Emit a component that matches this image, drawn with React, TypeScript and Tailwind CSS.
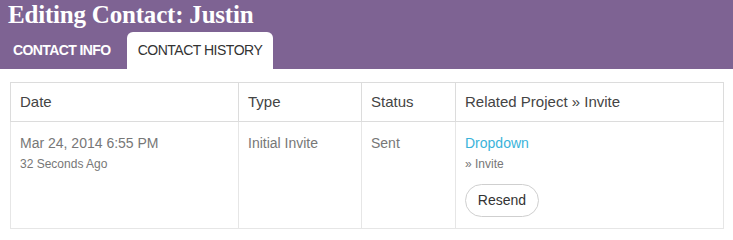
export default function App() {
  return (
    <div className="w-[733px] h-[240px] bg-white overflow-hidden" style={{ fontFamily: '"Liberation Sans", Arial, sans-serif' }}>
      <div className="bg-[#7e6393] h-[69px] flex flex-col">
        <h1
          className="text-white font-bold text-[25px] leading-none pl-[8px] pt-[2px] h-[32px] tracking-[-0.2px]"
          style={{ fontFamily: '"Liberation Serif", serif' }}
        >
          Editing Contact: Justin
        </h1>
        <div className="flex items-end h-[37px] pl-[13px]">
          <div className="h-full w-[114px] flex items-center text-white font-bold text-[14px] tracking-[-0.6px]">
            CONTACT INFO
          </div>
          <div className="h-full w-[146px] bg-white rounded-t-[6px] flex items-center justify-center text-[#333] text-[14px] tracking-[-0.5px]">
            CONTACT HISTORY
          </div>
        </div>
      </div>
      <div className="px-[10px] pt-[13px]">
        <table className="border-collapse border border-[#dcdcdc] w-[714px]">
          <thead>
            <tr className="h-[39px] text-[15px] text-[#444] text-left">
              <th className="font-normal w-[228px] pl-[9px] border border-[#dcdcdc]">Date</th>
              <th className="font-normal w-[123px] pl-[9px] border border-[#dcdcdc]">Type</th>
              <th className="font-normal w-[94px] pl-[9px] border border-[#dcdcdc]">Status</th>
              <th className="font-normal pl-[9px] border border-[#dcdcdc]">Related Project » Invite</th>
            </tr>
          </thead>
          <tbody>
            <tr className="align-top text-[14px] text-[#777]">
              <td className="border border-[#e6e6e6] pl-[9px] pt-[12px]">
                <div className="leading-[18px]">Mar 24, 2014 6:55 PM</div>
                <div className="text-[12px] leading-[16px] mt-[4px]">32 Seconds Ago</div>
              </td>
              <td className="border border-[#e6e6e6] pl-[9px] pt-[12px] leading-[18px]">Initial Invite</td>
              <td className="border border-[#e6e6e6] pl-[9px] pt-[12px] leading-[18px]">Sent</td>
              <td className="border border-[#e6e6e6] pl-[9px] pt-[12px] pb-[11px]">
                <a className="text-[#3ab3da] leading-[18px] block">Dropdown</a>
                <div className="text-[12px] leading-[16px] mt-[4px]">» Invite</div>
                <button className="mt-[12px] h-[33px] w-[74px] rounded-full border border-[#cfcfcf] text-[14px] text-[#333] bg-white">
                  Resend
                </button>
              </td>
            </tr>
          </tbody>
        </table>
      </div>
    </div>
  );
}
